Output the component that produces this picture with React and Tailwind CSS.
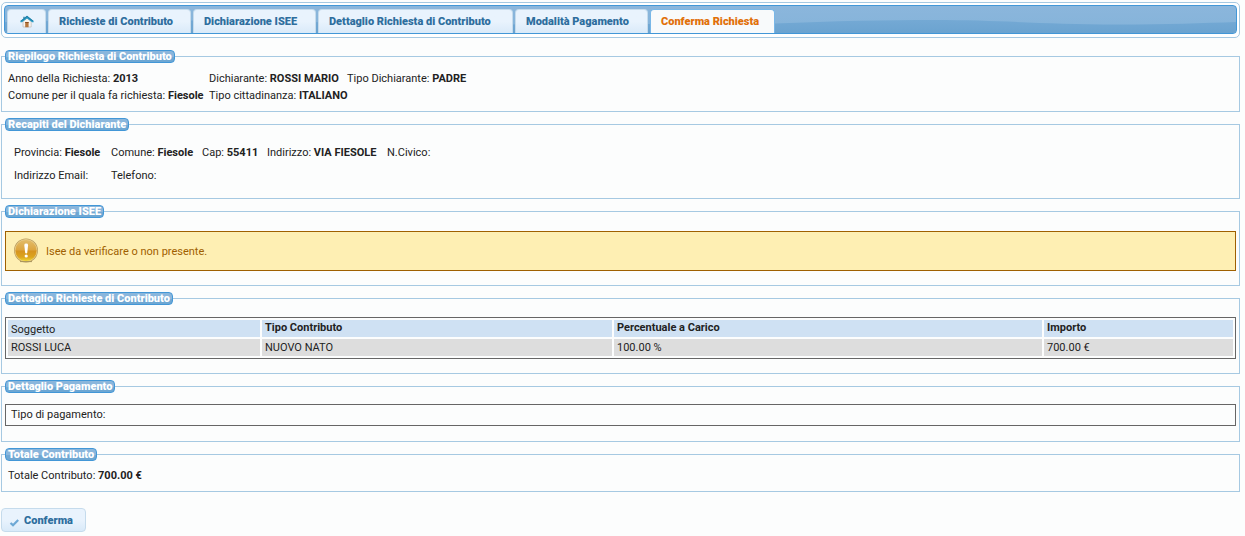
import React from "react";

const tabs = [
  { label: "Richieste di Contributo", width: "w-[143px]" },
  { label: "Dichiarazione ISEE", width: "w-[123px]" },
  { label: "Dettaglio Richiesta di Contributo", width: "w-[195px]" },
  { label: "Modalità Pagamento", width: "w-[133px]" },
  { label: "Conferma Richiesta", width: "w-[125px]", active: true },
];

const contributi = [
  {
    soggetto: "ROSSI LUCA",
    tipo: "NUOVO NATO",
    percentuale: "100.00 %",
    importo: "700.00 €",
  },
];

const HomeIcon = () => (
  <svg viewBox="0 0 14 13" className="h-[13px] w-[14px]">
    <path d="M3 6.5 7 3l4.2 3.5V12H3z" fill="#f7f3ee" stroke="#b9b4ae" strokeWidth=".6" />
    <path d="M5.2 7h3.4v5.2H5.2z" fill="#b5763c" />
    <path d="M5.2 7h3.4v1H5.2z" fill="#8a4f22" />
    <path d="M3.2 1.8h1.6v2H3.2z" fill="#4e8fae" />
    <path d="M7 .8 13.6 6v1.3h-1.5L7 3.4 2 7.3H.4V6z" fill="#2c9cc4" />
    <path d="M7 .8 13.6 6H12L7 2 2 6H.4z" fill="#227fa8" />
  </svg>
);

const WarningIcon = () => (
  <svg viewBox="0 0 26 26" className="h-[26px] w-[26px] shrink-0">
    <defs>
      <linearGradient id="warn" x1="0" y1="0" x2="0" y2="1">
        <stop offset="0" stopColor="#e2bd6c" />
        <stop offset=".48" stopColor="#dda53f" />
        <stop offset=".52" stopColor="#d6931f" />
        <stop offset=".8" stopColor="#dca51f" />
        <stop offset="1" stopColor="#f2dc35" />
      </linearGradient>
    </defs>
    <circle cx="13" cy="12.5" r="12" fill="#b79a5c" />
    <circle cx="13" cy="12.5" r="11" fill="url(#warn)" stroke="#efd595" strokeWidth=".7" />
    <path d="M7 23.6h12" stroke="#a8935c" strokeWidth="1" />
    <path d="M11.3 7q0-1.4 1.9-1.4T15.1 7l-.8 7.6q-.2.9-1.1.9t-1.1-.9z" fill="#fff" />
    <circle cx="13.2" cy="18" r="1.6" fill="#fff" />
  </svg>
);

const Fieldset = ({ legend, className = "", children }) => (
  <fieldset className="min-w-0 border border-[#a6c9e2] px-[3px]">
    <legend className="rounded-[4px] border border-[#4297d7] bg-linear-to-b from-[#8ab6dc] from-50% to-[#6ea7d3] to-60% px-0.5 font-black leading-[11px] text-white">
      {legend}
    </legend>
    <div className={className}>{children}</div>
  </fieldset>
);

const Field = ({ label, value, className = "" }) => (
  <span className={`whitespace-nowrap ${className}`}>
    {label}: {value && <b>{value}</b>}
  </span>
);

const Tabs = () => (
  <nav className="rounded-[5px] border border-[#a6c9e2] bg-white px-0.5 pt-0.5 pb-[3px]">
    <div className="relative flex h-[29px] items-end gap-0.5 overflow-hidden rounded-[4px] border border-[#4297d7] bg-linear-to-b from-[#8bb6dc] to-[#84b3d9] pl-0.5">
      <svg
        viewBox="0 0 1232 27"
        preserveAspectRatio="none"
        className="absolute inset-0 h-full w-full"
      >
        <defs>
          <linearGradient id="wave" x1="0" y1="0" x2="0" y2="1">
            <stop offset="0" stopColor="#74a9d4" />
            <stop offset="1" stopColor="#6ba3d0" />
          </linearGradient>
        </defs>
        <path
          d="M0 16C80 14 160 14 240 15S420 19 500 18.500S680 18 770 17.500C830 15 880 14 930 14C1000 14 1040 18.500 1115 18.500C1160 18.500 1200 17 1232 16V27H0z"
          fill="url(#wave)"
        />
      </svg>
      <a
        href="#"
        aria-label="Home"
        className="relative flex h-6 w-[39px] items-center justify-center rounded-t-[4px] border border-b-0 border-[#c5dbec] bg-linear-to-b from-[#e9f3fd] from-50% to-[#d9eaf9]"
      >
        <HomeIcon />
      </a>
      {tabs.map((tab) => (
        <a
          key={tab.label}
          href="#"
          className={`relative h-6 whitespace-nowrap rounded-t-[4px] border border-b-0 pl-2.5 font-black leading-[23px] ${tab.width} ${
            tab.active
              ? "border-[#79b7e7] bg-[#f8fafb] text-[#e17009]"
              : "border-[#c5dbec] bg-linear-to-b from-[#e9f3fd] from-50% to-[#d9eaf9] text-[#2e6e9e]"
          }`}
        >
          {tab.label}
        </a>
      ))}
    </div>
  </nav>
);

export default function App() {
  return (
    <div className="min-h-screen bg-[#fcfdfd] pt-0.5 pr-[5px] pl-px font-['Roboto','Liberation_Sans',sans-serif] text-[11px] leading-[17px] text-[#222222]">
      <Tabs />

      <form
        className="mt-3 flex flex-col gap-1.5"
        onSubmit={(e) => e.preventDefault()}
      >
        <Fieldset
          legend="Riepilogo Richiesta di Contributo"
          className="grid grid-cols-[201px_138px_1fr] px-[3px] py-[7px]"
        >
          <Field label="Anno della Richiesta" value="2013" />
          <Field label="Dichiarante" value="ROSSI MARIO" />
          <Field label="Tipo Dichiarante" value="PADRE" />
          <Field label="Comune per il quala fa richiesta" value="Fiesole" />
          <Field
            label="Tipo cittadinanza"
            value="ITALIANO"
            className="col-span-2"
          />
        </Fieldset>

        <Fieldset
          legend="Recapiti del Dichiarante"
          className="grid grid-cols-[97px_91px_65px_120px_1fr] px-[9px] pt-[10px] pb-[11px] leading-[23px]"
        >
          <Field label="Provincia" value="Fiesole" />
          <Field label="Comune" value="Fiesole" />
          <Field label="Cap" value="55411" />
          <Field label="Indirizzo" value="VIA FIESOLE" />
          <Field label="N.Civico" />
          <Field label="Indirizzo Email" />
          <Field label="Telefono" />
        </Fieldset>

        <Fieldset legend="Dichiarazione ISEE" className="pt-[13px] pb-[14px]">
          <div className="flex h-10 items-center gap-[7px] border border-[#9f6000] bg-[#feefb3] px-[7px] text-[#9f6000]">
            <WarningIcon />
            Isee da verificare o non presente.
          </div>
        </Fieldset>

        <Fieldset
          legend="Dettaglio Richieste di Contributo"
          className="pt-3 pb-[14px]"
        >
          <table className="w-full table-fixed border-separate border-spacing-0.5 border border-[#666666] text-left">
            <thead>
              <tr className="h-[17px] bg-[#cfe1f3] leading-[15px]">
                <td className="w-[252px] px-[3px] py-0 align-bottom">Soggetto</td>
                <th className="w-[350px] px-[3px] py-0 align-top">Tipo Contributo</th>
                <th className="w-[428px] px-[3px] py-0 align-top">Percentuale a Carico</th>
                <th className="px-[3px] py-0 align-top">Importo</th>
              </tr>
            </thead>
            <tbody>
              {contributi.map((c) => (
                <tr key={c.soggetto} className="bg-[#dddddd]">
                  <td className="px-[3px] py-0">{c.soggetto}</td>
                  <td className="px-[3px] py-0">{c.tipo}</td>
                  <td className="px-[3px] py-0">{c.percentuale}</td>
                  <td className="px-[3px] py-0">{c.importo}</td>
                </tr>
              ))}
            </tbody>
          </table>
        </Fieldset>

        <Fieldset legend="Dettaglio Pagamento" className="pt-[11px] pb-[15px]">
          <div className="border border-[#666666] px-[5px] leading-5">
            Tipo di pagamento:
          </div>
        </Fieldset>

        <Fieldset legend="Totale Contributo" className="px-[3px] pt-1.5 pb-[7px]">
          <Field label="Totale Contributo" value="700.00 €" />
        </Fieldset>

        <button
          type="submit"
          className="mt-[10px] flex h-6 w-[85px] items-center gap-1 rounded-[4px] border border-[#c5dbec] bg-linear-to-b from-[#e9f3fd] from-50% to-[#d9eaf9] pl-[7px] font-black text-[#2e6e9e]"
        >
          <svg viewBox="0 0 11 9" className="mt-1 h-[9px] w-[11px]">
            <path
              d="M1.5 5 4 7.2 9.2 2"
              fill="none"
              stroke="#6da8d5"
              strokeWidth="2.2"
            />
          </svg>
          Conferma
        </button>
      </form>
    </div>
  );
}
